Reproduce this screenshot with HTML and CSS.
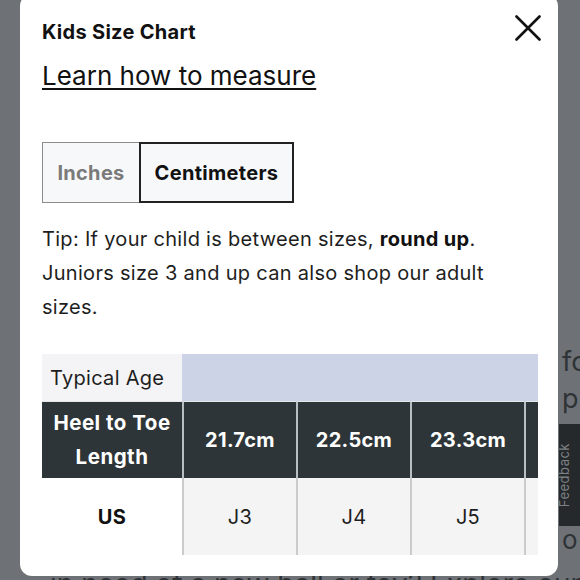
FILE: index.html
```html
<!DOCTYPE html>
<html lang="en">
<head>
<meta charset="utf-8">
<title>Kids Size Chart</title>
<link rel="stylesheet" href="styles.css">
</head>
<body>
<div class="page">
  <div class="behind-col">
    <div class="behind-line">fo</div>
    <div class="behind-line">p</div>
    <div class="behind-gap"></div>
    <div class="behind-line small">o</div>
  </div>
  <div class="feedback-tab"><span class="feedback-text">Feedback</span></div>
  <div class="behind-bottom">in need of a new ball or toy? Explore our</div>

  <div class="modal">
    <h2 class="title">Kids Size Chart</h2>
    <a class="measure-link" href="#">Learn how to measure</a>
    <button class="close" aria-label="Close">
      <svg width="26" height="26" viewBox="0 0 26 26"><path d="M1.5 1.5 L24.5 24.5 M24.5 1.5 L1.5 24.5" stroke="#111" stroke-width="2.6" stroke-linecap="round" fill="none"/></svg>
    </button>

    <div class="toggle">
      <button class="tog tog-off">Inches</button>
      <button class="tog tog-on">Centimeters</button>
    </div>

    <p class="tip">Tip: If your child is between sizes, <b>round up</b>. Juniors size 3 and up can also shop our adult sizes.</p>

    <div class="table-wrap">
      <div class="chart">
        <div class="cell age-label">Typical Age</div>
        <div class="cell age"></div>
        <div class="cell age"></div>
        <div class="cell age"></div>
        <div class="cell age"></div>
        <div class="cell age"></div>
        <div class="cell age"></div>

        <div class="cell head head-first">Heel to Toe<br>Length</div>
        <div class="cell head">21.7cm</div>
        <div class="cell head">22.5cm</div>
        <div class="cell head">23.3cm</div>
        <div class="cell head">24.1cm</div>
        <div class="cell head">24.9cm</div>
        <div class="cell head">25.7cm</div>

        <div class="cell us-label">US</div>
        <div class="cell us">J3</div>
        <div class="cell us">J4</div>
        <div class="cell us">J5</div>
        <div class="cell us">J6</div>
        <div class="cell us">J7</div>
        <div class="cell us">J8</div>
      </div>
    </div>
  </div>
</div>
</body>
</html>
```
FILE: styles.css
```css
* { box-sizing: border-box; }
html, body { margin: 0; padding: 0; }
body {
  font-family: "Inter", "Liberation Sans", sans-serif;
  color: #1a1a1a;
}
.page {
  position: relative;
  width: 580px;
  height: 580px;
  overflow: hidden;
  background: #6e7276;
}

/* page content behind the overlay */
.behind-col {
  position: absolute;
  left: 562px;
  top: 343px;
  color: #2f3336;
  font-size: 27px;
  line-height: 37px;
}
.behind-gap { height: 108px; }
.behind-line.small { font-size: 26px; line-height: 30px; }
.feedback-tab {
  position: absolute;
  left: 559px;
  top: 424px;
  width: 40px;
  height: 102px;
  background: #26292c;
  display: flex;
  align-items: center;
  justify-content: flex-start;
}
.feedback-text {
  writing-mode: vertical-rl;
  transform: rotate(180deg);
  color: #7d8184;
  font-size: 13px;
  letter-spacing: 0.5px;
  margin-left: -3px;
}
.behind-bottom {
  position: absolute;
  left: 50px;
  top: 566px;
  font-size: 28px;
  line-height: 36px;
  color: #2f3336;
  white-space: nowrap;
}

/* modal */
.modal {
  position: absolute;
  left: 20px;
  top: -6px;
  width: 538px;
  height: 582px;
  background: #fff;
  border-radius: 12px;
  padding: 26px 20px 0 22px;
  overflow: hidden;
}
.title {
  margin: 0;
  font-size: 20px;
  line-height: 24px;
  font-weight: 700;
  color: #111;
  letter-spacing: 0.3px;
}
.measure-link {
  display: block;
  width: max-content;
  margin-top: 16px;
  font-size: 26px;
  line-height: 32px;
  font-weight: 400;
  color: #111;
  text-decoration: underline;
  text-decoration-thickness: 2px;
  text-underline-offset: 3px;
}
.close {
  position: absolute;
  left: 495px;
  top: 20px;
  width: 28px;
  height: 28px;
  padding: 0;
  border: 0;
  background: none;
}
.close svg { display: block; }

.toggle {
  display: flex;
  margin-top: 50px;
  height: 61px;
}
.tog {
  font-family: inherit;
  font-size: 20px;
  font-weight: 700;
  background: #f7f8fa;
  padding: 0;
  margin: 0;
  letter-spacing: 0.3px;
}
.tog-off {
  width: 97px;
  color: #7a7a7a;
  border: 1.5px solid #8c8c8c;
  border-right: 0;
}
.tog-on {
  width: 155px;
  color: #111;
  border: 2px solid #222;
}

.tip {
  margin: 19px 0 0;
  width: 496px;
  font-size: 20px;
  line-height: 34px;
  letter-spacing: 0.3px;
  color: #1e1e1e;
}
.tip b { font-weight: 700; color: #111; }

.table-wrap {
  margin-top: 30px;
  width: 496px;
  overflow: hidden;
}
.chart {
  display: grid;
  grid-template-columns: 140px repeat(6, 114px);
  grid-template-rows: 47px 77px 77px;
  width: max-content;
}
.cell {
  display: flex;
  align-items: center;
  justify-content: center;
  text-align: center;
  font-size: 20px;
  line-height: 34px;
  letter-spacing: 0.3px;
}
.age-label {
  justify-content: flex-start;
  padding-left: 8px;
  background: #f4f4f6;
  color: #1e1e1e;
}
.age { background: #cdd3e6; }
.head {
  background: #2e3538;
  color: #fff;
  font-weight: 700;
  border-top: 1px solid #e8e8ea;
  border-left: 2px solid #b9bec1;
}
.head-first {
  border-left: 0;
  font-size: 20.5px;
  letter-spacing: 0.5px;
}
.us-label {
  background: #fff;
  font-weight: 700;
  color: #111;
}
.us {
  background: #f4f4f4;
  border-left: 2px solid #cbcbcb;
  color: #1e1e1e;
}
```
